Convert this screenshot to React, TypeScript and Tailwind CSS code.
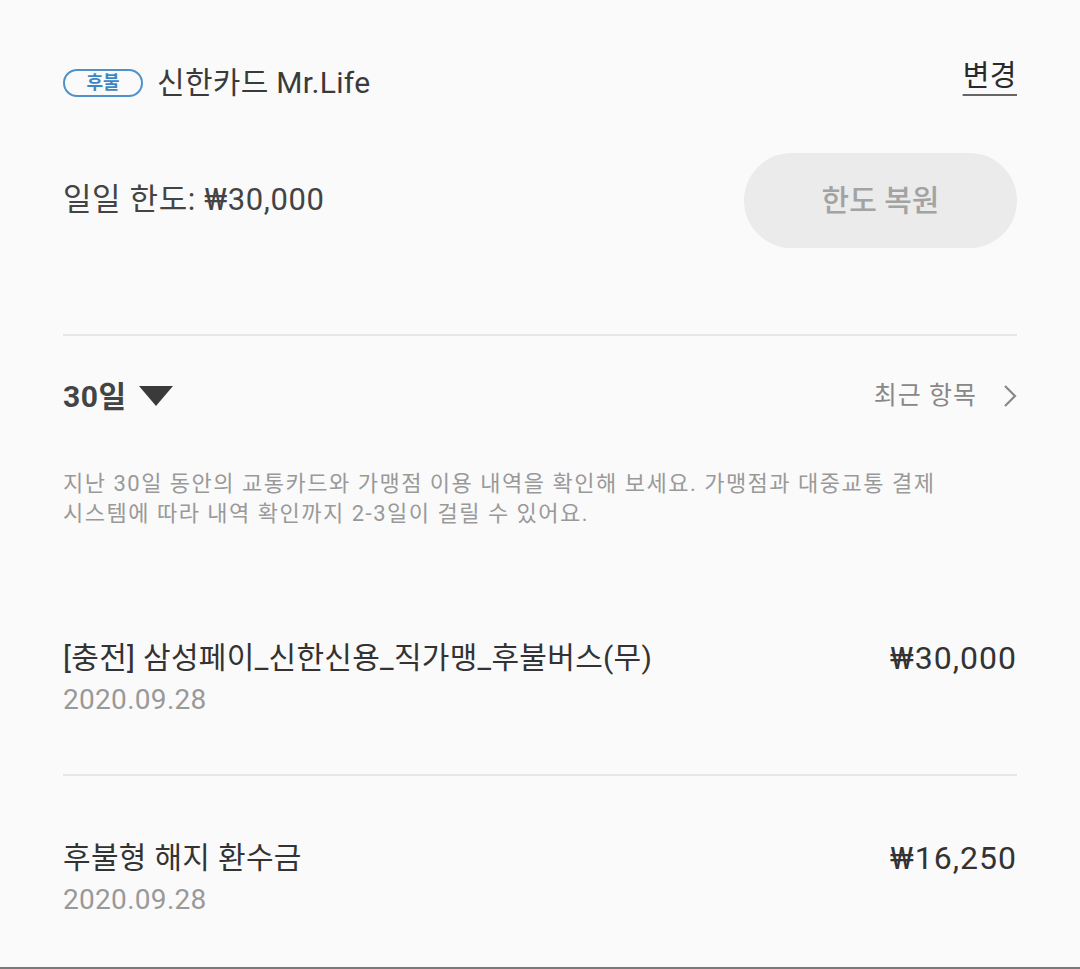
import React from 'react';

const font = "font-['Roboto','Noto_Sans_CJK_KR',sans-serif]";

const items = [
  { title: '[충전] 삼성페이_신한신용_직가맹_후불버스(무)', date: '2020.09.28', amount: '₩30,000', top: 'mt-[109px]' },
  { title: '후불형 해지 환수금', date: '2020.09.28', amount: '₩16,250', top: 'mt-[62px]' },
];

const App: React.FC = () => {
  return (
    <div className={`${font} h-[969px] bg-[#fafafa] px-[63px] border-b-2 border-[#7a7a7a] overflow-hidden`}>
      {/* Card header */}
      <div className="pt-[58px] h-[108px] flex items-center justify-between">
        <div className="flex items-center gap-[14px]">
          <span className="h-[28px] w-[80px] rounded-full border-2 border-[#4f92c9] flex items-center justify-center text-[18px] leading-none text-[#3d86c4] font-bold">
            후불
          </span>
          <span className="text-[30px] text-[#3a3a3a] leading-none tracking-[0.3px]">신한카드 Mr.Life</span>
        </div>
        <span className="text-[29px] text-[#2a2a2a] leading-none underline decoration-2 decoration-[#666] underline-offset-[8px] -mt-[14px] tracking-[0.5px]">
          변경
        </span>
      </div>

      {/* Daily limit */}
      <div className="mt-[45px] flex items-center justify-between">
        <span className="text-[31px] text-[#444] tracking-[0.6px]">일일 한도: ₩30,000</span>
        <button className="h-[95px] w-[273px] rounded-full bg-[#ebebeb] text-[30px] text-[#a3a3a3] font-medium">
          한도 복원
        </button>
      </div>

      <div className="mt-[86px] h-[2px] bg-[#e6e6e6]" />

      {/* Filter row */}
      <div className="mt-[30px] h-[60px] flex items-center justify-between">
        <div className="flex items-center gap-[12px]">
          <span className="text-[30px] font-bold text-[#444] tracking-[0.5px]">30일</span>
          <svg width="34" height="20" viewBox="0 0 34 20">
            <polygon points="0,0 34,0 17,20" fill="#3a3a3a" />
          </svg>
        </div>
        <div className="flex items-center gap-[26px] text-[#888]">
          <span className="text-[25px] tracking-[1px]">최근 항목</span>
          <svg width="14" height="24" viewBox="0 0 14 24" fill="none" stroke="#888" strokeWidth="2.2">
            <polyline points="2,2 12,12 2,22" />
          </svg>
        </div>
      </div>

      {/* Description */}
      <p className="mt-[43px] text-[22px] leading-[30px] text-[#999] tracking-[1.5px]">
        지난 30일 동안의 교통카드와 가맹점 이용 내역을 확인해 보세요. 가맹점과 대중교통 결제
        <br />
        시스템에 따라 내역 확인까지 2-3일이 걸릴 수 있어요.
      </p>

      {/* History */}
      {items.map((item, i) => (
        <div key={i}>
          <div className={`${item.top} flex justify-between`}>
            <div>
              <div className="text-[30px] leading-[40px] text-[#333] tracking-[0.3px]">{item.title}</div>
              <div className="mt-[2px] text-[28px] leading-[40px] text-[#999] tracking-[0.3px]">{item.date}</div>
            </div>
            <div className="text-[32px] leading-[40px] text-[#333] tracking-[1px]">{item.amount}</div>
          </div>
          {i === 0 && <div className="mt-[54px] h-[2px] bg-[#e6e6e6]" />}
        </div>
      ))}
    </div>
  );
};

export default App;
